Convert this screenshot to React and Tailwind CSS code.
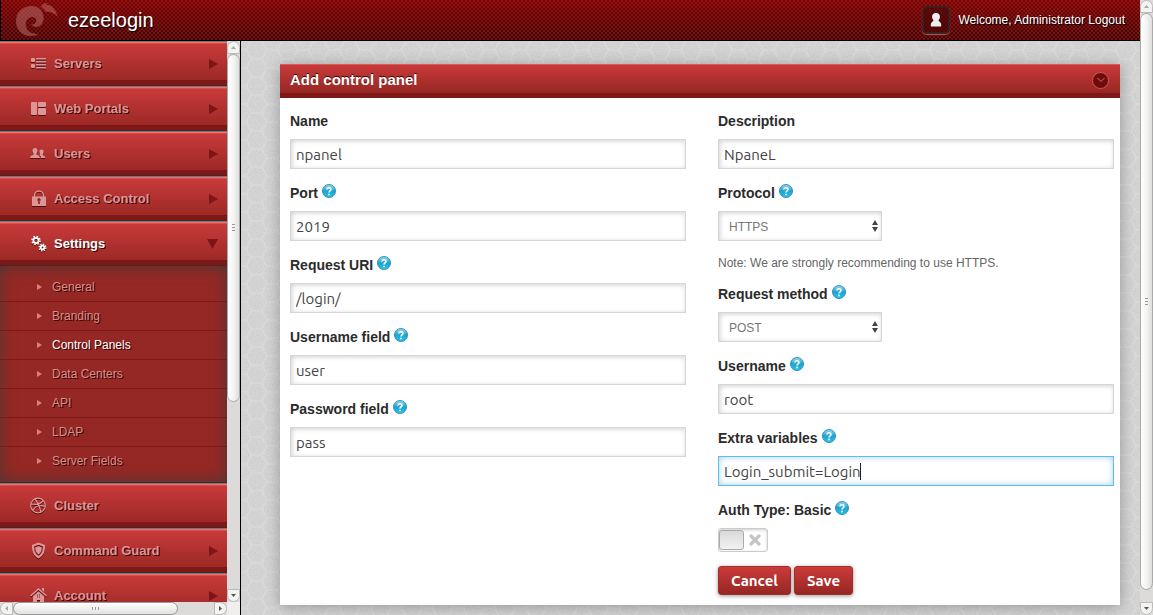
import { useState } from "react";

const SUB_ITEMS = ["General", "Branding", "Control Panels", "Data Centers", "API", "LDAP", "Server Fields"];

const NAV_TOP = [
  { label: "Servers",        icon: "servers", arrow: true },
  { label: "Web Portals",    icon: "portals", arrow: true },
  { label: "Users",          icon: "users",   arrow: true },
  { label: "Access Control", icon: "lock",    arrow: true },
  { label: "Settings",       icon: "gears",   open: true },
];

const NAV_BOTTOM = [
  { label: "Cluster",       icon: "ball" },
  { label: "Command Guard", icon: "shield", arrow: true },
  { label: "Account",       icon: "home",   arrow: true },
];

/* ── Icons ── */
function Gear({ cx, cy, r }) {
  return (
    <g>
      <circle cx={cx} cy={cy} r={r} fill="none" stroke="currentColor" strokeWidth="1.8" />
      <circle cx={cx} cy={cy} r={r + 1.4} fill="none" stroke="currentColor" strokeWidth="1.6"
        strokeDasharray={`${(r + 1.4) * 0.393} ${(r + 1.4) * 0.393}`} />
    </g>
  );
}

function NavIcon({ name }) {
  return (
    <svg viewBox="0 0 17 17" width="17" height="17" fill="currentColor" aria-hidden="true"
      className="shrink-0 drop-shadow-[0_1px_0_rgba(40,0,0,0.7)]">
      {name === "servers" && (
        <g>
          <rect x="1" y="3" width="4" height="4" rx="1" />
          <rect x="1" y="9" width="4" height="4" rx="1" />
          <path d="M6 3h10v1.4H6zM6 6h10v1.4H6zM6 9h10v1.4H6zM6 12h10v1.4H6z" />
        </g>
      )}
      {name === "portals" && (
        <g>
          <rect x="1" y="2" width="6" height="13" rx="1" />
          <rect x="8" y="2" width="8" height="5" rx="1" />
          <rect x="8" y="8" width="8" height="7" rx="1" />
        </g>
      )}
      {name === "users" && (
        <g>
          <path d="M5 3c1.700 0 2.600 1.300 2.500 3-.1 1.200-.6 2-1 2.600v1.200c1.500.6 3.500 1.200 3.500 3.200H0c0-2 2-2.600 3.500-3.200V8.600C3 8 2.600 7.200 2.500 6 2.400 4.300 3.300 3 5 3z" />
          <path d="M11.500 4.500c1.500 0 2.300 1.100 2.200 2.500-.1 1-.5 1.700-.9 2.200v1c1.200.5 2.700 1 2.700 2.800H11c-.1-1.600-1-2.600-2-3.200l1.300-.600V9.200c-.4-.5-.8-1.200-.9-2.200-.1-1.400.6-2.500 2.100-2.500z" />
        </g>
      )}
      {name === "lock" && (
        <g>
          <path d="M4.500 7V5.500a4.500 4.500 0 0 1 9 0V7" fill="none" stroke="currentColor" strokeWidth="1.300" />
          <path fillRule="evenodd" d="M2 6.500h14V16H2zM9 8.300a1.700 1.700 0 0 0-1 3V14h2v-2.700a1.700 1.700 0 0 0-1-3z" />
        </g>
      )}
      {name === "gears" && (
        <g>
          <Gear cx={6} cy={5.5} r={2.6} />
          <Gear cx={12.500} cy={12.500} r={1.800} />
        </g>
      )}
      {name === "ball" && (
        <g fill="none" stroke="currentColor" strokeWidth="1.200">
          <circle cx="8" cy="8.500" r="7.300" />
          <path d="M1 7c5 1 10 0 12.500-3.800M5 2c3 3.500 5 8 5.700 13M3 13.500C5 9 10 7.500 15.200 9.300" />
        </g>
      )}
      {name === "shield" && (
        <g>
          <path fillRule="evenodd" d="M8.500.5 15 3c.2 6-1 10.500-6.500 13.500C3 13.500 1.800 9 2 3zM8.500 2.800 4 4.500c0 4 .9 7.300 4.500 9.500 3.600-2.200 4.500-5.500 4.500-9.500z" />
          <path d="M8.500 4.300 11.700 5.500c0 3-.7 5.200-3.200 7-2.500-1.800-3.200-4-3.200-7z" />
        </g>
      )}
      {name === "home" && (
        <g>
          <path d="M.5 9 8.500 2l8 7" fill="none" stroke="currentColor" strokeWidth="1.500" />
          <path d="M12 1h2v4l-2-1.700z" />
          <path fillRule="evenodd" d="M8.500 4.500 14 9.200V17h-4v-4H7v4H3V9.200zM7 7.500v1h1v-1zm2 0v1h1v-1zm-2 2v1h1v-1zm2 0v1h1v-1z" />
        </g>
      )}
    </svg>
  );
}

function Logo() {
  return (
    <svg viewBox="0 0 44 36" width="44" height="36" fill="#b06060" fillOpacity="0.6" aria-hidden="true">
      <path d="M17 4C7 4 1 11 1 19c0 9 7 15 14 15 4 0 7-1 9-2-7 0-12-2-13-8-1-5 2-9 6-9 3 0 5 2 4 5-1 2-3 3-5 2 2 4 8 4 11 0 4-6 1-18-10-18z" />
      <path d="M26 5c1-3 4-4.500 7-4l-3 2c6-1 10 3 13 12-4-4-8-6-12-5-2-3-3-4-5-5z" />
    </svg>
  );
}

function HelpIcon() {
  return (
    <svg viewBox="0 0 14 14" width="14" height="14" aria-hidden="true" className="shrink-0">
      <defs>
        <linearGradient id="helpFill" x1="0" y1="0" x2="0" y2="1">
          <stop offset="0" stopColor="#9adcef" />
          <stop offset="0.5" stopColor="#1fa3cf" />
          <stop offset="1" stopColor="#23c6ee" />
        </linearGradient>
      </defs>
      <circle cx="7" cy="7" r="6.500" fill="url(#helpFill)" stroke="#2389ae" strokeWidth="0.900" />
      <path d="M5 5.500C5 3.200 9 3.200 9 5.400 9 6.800 7 6.900 7 8.500" fill="none" stroke="#fff" strokeWidth="1.500" />
      <circle cx="7" cy="10.500" r="0.950" fill="#fff" />
    </svg>
  );
}

function Backdrop() {
  return (
    <svg className="absolute inset-0 h-full w-full" aria-hidden="true">
      <defs>
        <pattern id="hex" width="45" height="30" patternUnits="userSpaceOnUse" patternTransform="scale(0.690 0.600)">
          <path d="M0 15h7.500L15 0h15l7.500 15H45M7.500 15 15 30h15l7.500-15" fill="none" stroke="#dcdcdc" strokeWidth="1.600" />
        </pattern>
        <filter id="grain">
          <feTurbulence type="fractalNoise" baseFrequency="0.7" numOctaves="2" />
          <feColorMatrix values="0 0 0 0 0.300  0 0 0 0 0.300  0 0 0 0 0.300  0.300 0 0 0 -0.100" />
        </filter>
      </defs>
      <rect width="100%" height="100%" fill="#d6d6d6" />
      <rect width="100%" height="100%" filter="url(#grain)" />
      <rect width="100%" height="100%" fill="url(#hex)" />
    </svg>
  );
}

/* ── Scrollbars ── */
function Grip({ horizontal }) {
  return (
    <span className={`flex gap-[2px] ${horizontal ? "flex-row" : "flex-col"}`}>
      {[0, 1, 2].map(i => (
        <span key={i} className={horizontal ? "h-[3px] w-px bg-[#999]" : "h-px w-[3px] bg-[#999]"} />
      ))}
    </span>
  );
}

function ScrollArrow({ dir }) {
  const points = { up: "4,8 6.5,5 9,8", down: "4,5 6.5,8 9,5", left: "8,4 5,6.5 8,9", right: "5,4 8,6.5 5,9" };
  const round = { up: "rounded-t-full", down: "rounded-b-full", left: "rounded-l-full", right: "rounded-r-full" };
  const faded = dir === "up" || dir === "left";
  return (
    <button type="button" aria-label={`Scroll ${dir}`}
      className={`flex size-[13px] shrink-0 items-center justify-center border border-[#bbb] bg-[#f3f3f2] ${round[dir]}`}>
      <svg viewBox="0 0 13 13" width="13" height="13" className="shrink-0">
        <polygon points={points[dir]} fill={faded ? "#aaa" : "#555"} />
      </svg>
    </button>
  );
}

function VScroll({ thumb }) {
  return (
    <div className="flex w-[13px] shrink-0 flex-col bg-[#dcdbd9]">
      <ScrollArrow dir="up" />
      <div className="flex min-h-0 flex-1 flex-col">
        <div className={`flex items-center justify-center rounded-full border border-[#aaa] bg-linear-to-r from-white via-[#f4f4f3] to-[#dededc] ${thumb}`}>
          <Grip />
        </div>
      </div>
      <ScrollArrow dir="down" />
    </div>
  );
}

function HScroll() {
  return (
    <div className="flex h-[13px] bg-[#f0efee]">
      <div className="flex min-w-0 flex-1 bg-[#dcdbd9]">
        <ScrollArrow dir="left" />
        <div className="min-w-0 flex-1">
          <div className="flex h-full w-[82%] items-center justify-center rounded-full border border-[#999] bg-linear-to-b from-white to-[#e2e2e0]">
            <Grip horizontal />
          </div>
        </div>
        <ScrollArrow dir="right" />
      </div>
      <div className="w-[13px]" />
    </div>
  );
}

/* ── Sidebar ── */
function NavItem({ item }) {
  return (
    <a href="#" className={`flex h-[45px] items-center border-t border-b border-t-[#777] border-b-[#3b2b2b] bg-linear-to-b from-[#cb3b3b] to-[#962723] pr-[9px] pl-[30px] text-[13px] font-bold shadow-[inset_0_1px_0_#f07070,inset_0_2px_0_#d84c4c,inset_0_-5px_0_#7f1717] [text-shadow:1px_1px_0_#300] ${
      item.open ? "text-white" : "text-[#dc9696]"
    }`}>
      <NavIcon name={item.icon} />
      <span className="ml-[7px] flex-1">{item.label}</span>
      {item.arrow && (
        <svg viewBox="0 0 9 10" width="9" height="10"><polygon points="0,0 9,5 0,10" fill="#7d1515" /></svg>
      )}
      {item.open && (
        <svg viewBox="0 0 11 10" width="11" height="10"><polygon points="0,0 11,0 5.5,10" fill="#7d1515" /></svg>
      )}
    </a>
  );
}

function Sidebar() {
  return (
    <aside className="flex w-[241px] shrink-0 flex-col border-r border-black">
      <div className="flex min-h-0 flex-1">
        <nav className="min-w-0 flex-1 overflow-hidden">
          {NAV_TOP.map(item => <NavItem key={item.label} item={item} />)}
          <ul className="border-b border-[#3b2b2b] bg-[#952824] pt-[7px] pb-[6px] shadow-[inset_0_0_16px_#4a3838]">
            {SUB_ITEMS.map(label => (
              <li key={label} className="border-b border-[#7f1717] last:border-transparent">
                <a href="#" className={`flex h-7 items-center pl-[37px] text-[12px] [text-shadow:1px_1px_0_#300] ${
                  label === "Control Panels" ? "text-white" : "text-[#d68f8b]"
                }`}>
                  <svg viewBox="0 0 5 6" width="5" height="6" className="mr-[10px]"><polygon points="0,0 5,3 0,6" fill="#d98080" /></svg>
                  {label}
                </a>
              </li>
            ))}
          </ul>
          {NAV_BOTTOM.map(item => <NavItem key={item.label} item={item} />)}
        </nav>
        <VScroll thumb="h-[65%]" />
      </div>
      <HScroll />
    </aside>
  );
}

/* ── Form fields ── */
function Label({ id, text, help }) {
  return (
    <div className="mb-2 flex h-5 items-center gap-1">
      <label htmlFor={id} className="text-[14px] font-bold text-[#2b2b2b]">{text}</label>
      {help && <span className="pb-1"><HelpIcon /></span>}
    </div>
  );
}

function TextField({ id, label, help, value, active }) {
  return (
    <div className="mb-[14px]">
      <Label id={id} text={label} help={help} />
      <div className="relative">
        <input id={id} type="text" defaultValue={value}
          className={`block h-[30px] w-full border bg-white px-[5px] font-['Ubuntu','Noto_Sans',sans-serif] text-[15px] text-[#444] outline-none ${
            active
              ? "border-[#5bbdf0] shadow-[inset_0_0_6px_#a5cfe6]"
              : "border-[#d6d6d6] shadow-[inset_1px_1px_5px_#d0d0d0]"
          }`} />
        {active && <span className="pointer-events-none absolute top-[7px] left-[142px] h-[17px] w-px bg-[#222]" />}
      </div>
    </div>
  );
}

function SelectField({ id, label, options }) {
  return (
    <div className="mb-[14px]">
      <Label id={id} text={label} help />
      <div className="relative w-[164px]">
        <select id={id} className="block h-[30px] w-full appearance-none border border-[#d6d6d6] bg-white px-[10px] pt-px text-[12px] text-[#777] shadow-[inset_1px_1px_5px_#d0d0d0] outline-none">
          {options.map(o => <option key={o}>{o}</option>)}
        </select>
        <svg viewBox="0 0 6 12" width="6" height="12" className="pointer-events-none absolute top-[9px] right-1">
          <path d="M3 0 6 5H0zM3 12 0 7h6z" fill="#444" />
        </svg>
      </div>
    </div>
  );
}

export default function App() {
  const [basic, setBasic] = useState(false);

  const btn = "h-[29px] rounded-[3px] border border-[#a52a2a] bg-linear-to-b from-[#cb3b3b] to-[#962723] font-['Ubuntu','Noto_Sans',sans-serif] text-[15px] leading-none font-bold text-white shadow-[0_1px_4px_rgba(0,0,0,0.4)]";

  return (
    <div className="flex h-screen overflow-hidden font-['Liberation_Sans',Arial,sans-serif]">
      <div className="flex min-w-0 flex-1 flex-col">
        <header className="flex h-[41px] shrink-0 items-center border-b border-l border-black bg-[radial-gradient(circle_at_1px_1px,rgba(190,70,70,0.4)_0.6px,transparent_1.1px),radial-gradient(circle_at_3px_3px,rgba(190,70,70,0.4)_0.6px,transparent_1.1px),linear-gradient(to_bottom,#7c0000,#430000)] bg-size-[4px_4px,4px_4px,100%_100%] pr-[15px] pl-[14px] text-white">
          <Logo />
          <h1 className="ml-[9px] flex-1 text-[20px] [text-shadow:1px_1px_1px_#000]">ezeelogin</h1>
          <span className="mr-2 flex size-7 items-center justify-center rounded-[5px] border-2 border-[#3a2020] bg-[#4a0606]/70 shadow-[0_1px_1px_#b06060]">
            <svg viewBox="0 0 12 14" width="12" height="14" fill="#eee" aria-hidden="true">
              <path d="M6 0c2.400 0 4 1.600 4 3.800C10 5.500 9 6.300 8.600 7c0 2 2.600 1.700 2.600 5v1.500H.8V12c0-3.300 2.600-3 2.600-5C3 6.300 2 5.500 2 3.800 2 1.600 3.600 0 6 0z" />
            </svg>
          </span>
          <span className="text-[12px] [text-shadow:1px_1px_0_#000]">
            Welcome, <a href="#">Administrator</a> <a href="#">Logout</a>
          </span>
        </header>

        <div className="flex min-h-0 flex-1">
          <Sidebar />
          <main className="relative min-w-0 flex-1 overflow-hidden">
            <Backdrop />
            <section className="relative mt-[23px] mr-5 ml-[39px] bg-white shadow-[0_2px_14px_rgba(0,0,0,0.3)]">
              <div className="flex h-[34px] items-center justify-between border-t border-t-[#d95a5a] border-b-[5px] border-b-[#7f1717] bg-linear-to-b from-[#c93a3a] to-[#962723] pt-[2px] pr-[11px] pl-[10px]">
                <h2 className="text-[15px] font-bold text-white [text-shadow:0_-1px_0_#300]">Add control panel</h2>
                <button type="button" aria-label="Collapse panel"
                  className="flex size-[17px] items-center justify-center rounded-full border border-[#e05050] bg-[#6b0d0d]">
                  <svg viewBox="0 0 8 6" width="8" height="6"><path d="M.5 1 4 4.500 7.500 1" fill="none" stroke="#e86a5a" /></svg>
                </button>
              </div>

              <form className="grid grid-cols-2 gap-x-8 pt-[13px] pr-[6px] pb-[10px] pl-[10px]" onSubmit={e => e.preventDefault()}>
                <div>
                  <TextField id="name" label="Name" value="npanel" />
                  <TextField id="port" label="Port" value="2019" help />
                  <TextField id="uri" label="Request URI" value="/login/" help />
                  <TextField id="userField" label="Username field" value="user" help />
                  <TextField id="passField" label="Password field" value="pass" help />
                </div>
                <div>
                  <TextField id="desc" label="Description" value="NpaneL" />
                  <SelectField id="protocol" label="Protocol" options={["HTTPS", "HTTP"]} />
                  <p className="mb-[13px] text-[12px] leading-4 text-[#666]">Note: We are strongly recommending to use HTTPS.</p>
                  <SelectField id="method" label="Request method" options={["POST", "GET"]} />
                  <TextField id="username" label="Username" value="root" help />
                  <TextField id="extra" label="Extra variables" value="Login_submit=Login" help active />
                  <Label id="auth" text="Auth Type: Basic" help />
                  <div className="relative mb-[14px] h-6 w-[50px]">
                    <input id="auth" type="checkbox" checked={basic} onChange={e => setBasic(e.target.checked)}
                      className="block h-full w-full appearance-none rounded-[3px] border border-[#ccc] bg-white shadow-[inset_0_1px_3px_#ccc]" />
                    <span className={`pointer-events-none absolute top-[2px] h-5 w-[25px] rounded-[3px] border border-[#aaa] bg-linear-to-b from-[#d9d9d9] to-[#f2f2f2] ${basic ? "right-px" : "left-px"}`} />
                    {!basic && (
                      <svg viewBox="0 0 12 12" width="12" height="12" className="pointer-events-none absolute top-[6px] right-[7px]">
                        <path d="M2 2l8 8M10 2l-8 8" stroke="#c4c4c4" strokeWidth="3.200" strokeLinecap="round" />
                      </svg>
                    )}
                  </div>
                  <div className="flex gap-[3px]">
                    <button type="button" className={`${btn} px-3`}>Cancel</button>
                    <button type="submit" className={`${btn} px-3`}>Save</button>
                  </div>
                </div>
              </form>
            </section>
          </main>
        </div>
      </div>
      <VScroll thumb="h-[98%]" />
    </div>
  );
}
